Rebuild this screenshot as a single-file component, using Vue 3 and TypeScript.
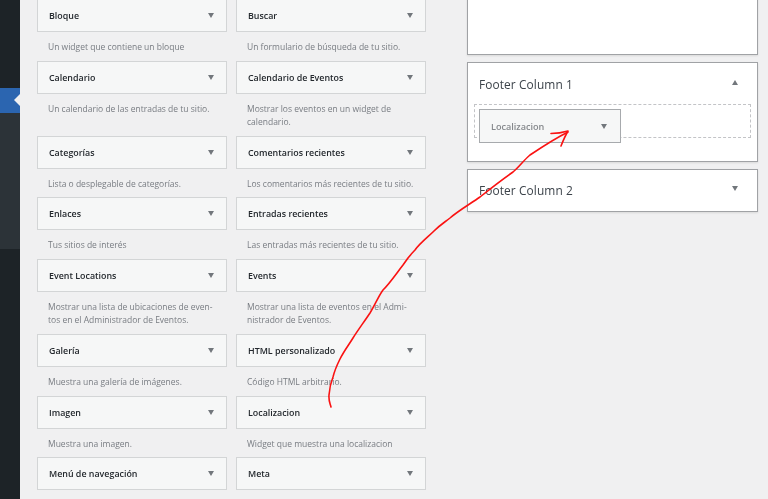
<script setup lang="ts">
interface Widget { title: string; desc: string }
const widgets: Widget[] = [
  { title: 'Bloque', desc: 'Un widget que contiene un bloque' },
  { title: 'Buscar', desc: 'Un formulario de búsqueda de tu sitio.' },
  { title: 'Calendario', desc: 'Un calendario de las entradas de tu sitio.' },
  { title: 'Calendario de Eventos', desc: 'Mostrar los eventos en un widget de\ncalendario.' },
  { title: 'Categorías', desc: 'Lista o desplegable de categorías.' },
  { title: 'Comentarios recientes', desc: 'Los comentarios más recientes de tu sitio.' },
  { title: 'Enlaces', desc: 'Tus sitios de interés' },
  { title: 'Entradas recientes', desc: 'Las entradas más recientes de tu sitio.' },
  { title: 'Event Locations', desc: 'Mostrar una lista de ubicaciones de even-\ntos en el Administrador de Eventos.' },
  { title: 'Events', desc: 'Mostrar una lista de eventos en el Admi-\nnistrador de Eventos.' },
  { title: 'Galería', desc: 'Muestra una galería de imágenes.' },
  { title: 'HTML personalizado', desc: 'Código HTML arbitrario.' },
  { title: 'Imagen', desc: 'Muestra una imagen.' },
  { title: 'Localizacion', desc: 'Widget que muestra una localizacion' },
  { title: 'Menú de navegación', desc: '' },
  { title: 'Meta', desc: '' },
]
</script>

<template>
  <div class="page">
    <aside class="sidebar">
      <div class="side-top"></div>
      <div class="side-active"><span class="notch"></span></div>
      <div class="side-sub"></div>
      <div class="side-rest"></div>
    </aside>

    <main class="available">
      <div v-for="w in widgets" :key="w.title" class="widget">
        <div class="card">
          <span class="title">{{ w.title }}</span>
          <span class="arrow down"></span>
        </div>
        <p class="desc">{{ w.desc }}</p>
      </div>
    </main>

    <section class="areas">
      <div class="area first"></div>
      <div class="area open">
        <div class="area-head">
          <span class="area-title">Footer Column 1</span>
          <span class="arrow up"></span>
        </div>
        <div class="dropzone"></div>
      </div>
      <div class="area closed">
        <div class="area-head">
          <span class="area-title">Footer Column 2</span>
          <span class="arrow down lifted"></span>
        </div>
      </div>
    </section>

    <div class="dragged">
      <span class="dragged-title">Localizacion</span>
      <span class="arrow down"></span>
    </div>

    <svg class="scribble" width="768" height="499" viewBox="0 0 768 499" fill="none">
      <path d="M331 407 C330 403 328.500 401 329 395 C329.500 388 331 382 333 377 C335 369 337 365 340 359 C344 351 348 346 353 338 C358 330 364 322 370 313 C375 305 378 297 383 290 C390 283 396 274 403 265 C407 259 411 254 415 250 C420 243 428 237 434 231 C440 225 445 222 450 218 C458 211 470 204 480 197 C490 189 503 179 513 172 C519 167 524 160 530 155 C542 147 556 138 568 132" stroke="#fa1212" stroke-width="1.600" stroke-linecap="round" stroke-linejoin="round"/>
      <path d="M551 133.500 C557 133.500 563 132.500 568 131 C565 136 563 141 561 146" stroke="#fa1212" stroke-width="1.600" stroke-linecap="round" stroke-linejoin="round"/>
    </svg>
  </div>
</template>

<style>
html, body { margin: 0; background: #f0f0f1; }
</style>

<style scoped>
.page {
  position: relative;
  width: 768px;
  height: 499px;
  overflow: hidden;
  display: flex;
  background: #f0f0f1;
  font-family: "Open Sans", "Noto Sans", sans-serif;
  filter: blur(0.4px);
}
.sidebar {
  width: 20px;
  flex: none;
  display: flex;
  flex-direction: column;
  background: #1d2327;
}
.side-top { height: 88px; }
.side-active { position: relative; height: 25px; background: #2b65b0; }
.notch {
  position: absolute;
  right: 0;
  top: 6px;
  border: 6px solid transparent;
  border-left-width: 0;
  border-right-color: #f0f0f1;
}
.side-sub { height: 136px; background: #2c3338; }
.side-rest { flex: 1; }

.available {
  flex: none;
  width: 389px;
  margin: -1px 0 0 17px;
  display: grid;
  grid-template-columns: 190px 190px;
  column-gap: 9px;
  align-content: start;
}
.widget { min-width: 0; }
.card {
  box-sizing: border-box;
  height: 33px;
  padding: 0 12px 0 11px;
  display: flex;
  align-items: center;
  justify-content: space-between;
  background: #f6f7f7;
  border: 1px solid #d3d5d6;
}
.title {
  font-size: 8.900px;
  font-weight: 600;
  color: #23282d;
  white-space: nowrap;
}
.desc {
  margin: 0;
  padding: 8px 0 7.750px 11px;
  min-height: 13px;
  font-size: 8.500px;
  line-height: 13px;
  color: #787c82;
  white-space: pre-line;
}
.arrow {
  flex: none;
  width: 0;
  height: 0;
  border-left: 3.500px solid transparent;
  border-right: 3.500px solid transparent;
}
.arrow.down { border-top: 5px solid #72777c; }
.arrow.up { border-bottom: 5px solid #72777c; margin-top: -3px; }
.arrow.lifted { margin-top: -3px; }

.areas {
  flex: none;
  width: 291px;
  margin: -30px 0 0 41px;
  display: flex;
  flex-direction: column;
  gap: 7px;
}
.area {
  box-sizing: border-box;
  background: #fff;
  border: 1px solid #a0a2a5;
  box-shadow: 0 1px 2px rgba(0, 0, 0, 0.1);
}
.area.first { height: 85px; border-top: 0; }
.area.open { height: 100px; }
.area-head {
  height: 41px;
  box-sizing: border-box;
  padding: 0 19px 0 11px;
  display: flex;
  align-items: center;
  justify-content: space-between;
}
.area.closed .area-head { padding-bottom: 2px; }
.area-title {
  font-size: 11.900px;
  font-weight: 500;
  color: #3c434a;
  letter-spacing: 0.100px;
}
.dropzone {
  box-sizing: border-box;
  height: 34px;
  margin: 0 6px;
  border: 1px dashed #c3c4c7;
}
.dragged {
  position: absolute;
  left: 479px;
  top: 109px;
  box-sizing: border-box;
  width: 142px;
  height: 34px;
  padding: 0 13px 0 11px;
  display: flex;
  align-items: center;
  justify-content: space-between;
  background: #f6f7f7;
  border: 1px solid #a7aaad;
}
.dragged-title {
  font-size: 9.100px;
  font-weight: 600;
  color: #85888c;
}
.scribble {
  position: absolute;
  left: 0;
  top: 0;
  pointer-events: none;
}
</style>
